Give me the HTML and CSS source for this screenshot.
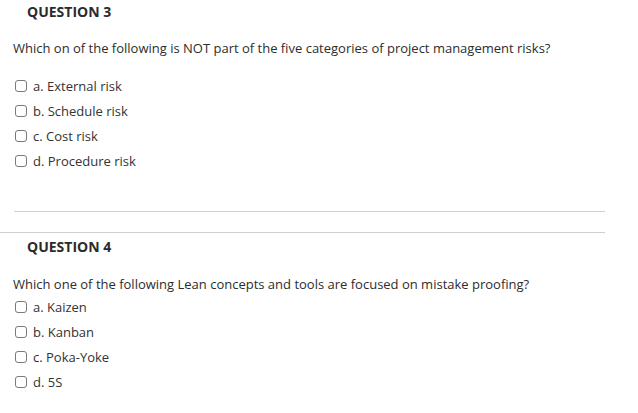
FILE: index.html
```html
<!DOCTYPE html>
<html>
<head>
<meta charset="utf-8">
<link rel="stylesheet" href="styles.css">
</head>
<body>
<section class="question q3">
  <h2 class="q-head">QUESTION 3</h2>
  <p class="q-text">Which on of the following is NOT part of the five categories of project management risks?</p>
  <ul class="options">
    <li><span class="box"></span>a. External risk</li>
    <li><span class="box"></span>b. Schedule risk</li>
    <li><span class="box"></span>c. Cost risk</li>
    <li><span class="box"></span>d. Procedure risk</li>
  </ul>
</section>
<hr class="sep sep-inner">
<hr class="sep sep-outer">
<section class="question q4">
  <h2 class="q-head">QUESTION 4</h2>
  <p class="q-text">Which one of the following Lean concepts and tools are focused on mistake proofing?</p>
  <ul class="options">
    <li><span class="box"></span>a. Kaizen</li>
    <li><span class="box"></span>b. Kanban</li>
    <li><span class="box"></span>c. Poka-Yoke</li>
    <li><span class="box"></span>d. 5S</li>
  </ul>
</section>
</body>
</html>
```
FILE: styles.css
```css
html, body {
  margin: 0;
  padding: 0;
  background: #fff;
}
body {
  font-family: "Open Sans", "Liberation Sans", sans-serif;
  font-size: 13px;
  color: #333;
  width: 638px;
}
.question {
  display: flex;
  flex-direction: column;
}
.q-head {
  margin: 2px 0 0 0;
  padding-left: 27px;
  font-size: 14px;
  font-weight: 700;
  line-height: 20px;
  color: #2b2b2b;
}
.q-text {
  margin: 16px 0 0 0;
  padding-left: 13px;
  line-height: 20px;
  color: #2d2d2d;
}
.options {
  list-style: none;
  margin: 15px 0 0 0;
  padding: 0 0 0 15px;
}
.options li {
  height: 25px;
  display: flex;
  align-items: center;
  line-height: 20px;
}
.box {
  width: 10px;
  height: 10px;
  border: 1px solid #7a7a7a;
  border-radius: 3px;
  margin-right: 6px;
  flex: none;
}
.sep {
  border: none;
  border-top: 1px solid #cfcfcf;
  height: 0;
  margin: 0;
}
.sep-inner {
  margin: 38px 0 0 14px;
  width: 591px;
}
.sep-outer {
  margin: 20px 0 0 0;
  width: 605px;
}
.q4 .q-head {
  margin-top: 4px;
}
.q4 .q-text {
  margin-top: 17px;
}
.q4 .options {
  margin-top: 0;
}
```
